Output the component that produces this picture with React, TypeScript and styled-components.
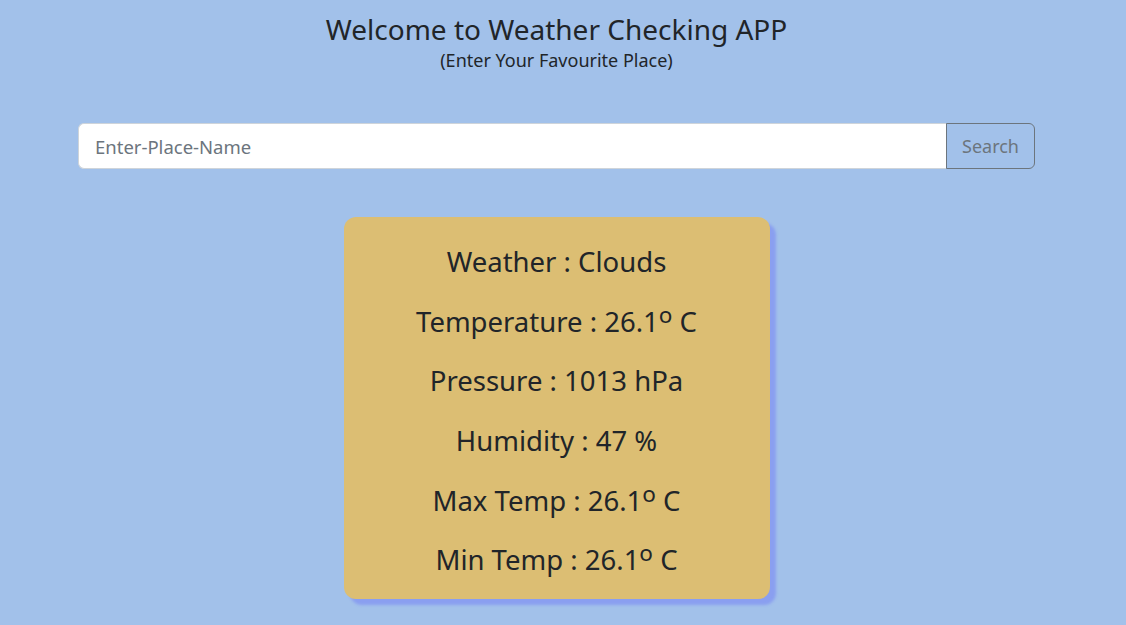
import React, { useState } from "react";
import styled, { createGlobalStyle } from "styled-components";

const GlobalStyle = createGlobalStyle`
  html, body {
    margin: 0;
    padding: 0;
    background: #a2c1ea;
  }
  body {
    font-family: "Noto Sans", "Open Sans", sans-serif;
    color: #212529;
  }
  * {
    box-sizing: border-box;
  }
`;

// Styled Components(Layout)
const Page = styled.div`
  width: 1113px;
  min-height: 625px;
  display: flex;
  flex-direction: column;
  align-items: center;
`;

const Header = styled.header`
  display: flex;
  flex-direction: column;
  align-items: center;
  padding-top: 13px;
`;

const Title = styled.h1`
  font-size: 28px;
  font-weight: 400;
  line-height: 1.2;
  margin: 0;
`;

const Subtitle = styled.p`
  font-size: 18px;
  line-height: 1.2;
  margin: 3px 0 0;
`;

const SearchGroup = styled.form`
  display: flex;
  width: 957px;
  height: 46px;
  margin-top: 52px;
`;

const SearchInput = styled.input`
  flex: 1;
  height: 100%;
  padding: 0 16px;
  font-family: inherit;
  font-size: 18.5px;
  color: #212529;
  background: #fff;
  border: 1px solid #ced4da;
  border-right: none;
  border-radius: 6px 0 0 6px;
  outline: none;

  &::placeholder {
    color: #6c757d;
  }
`;

const SearchButton = styled.button`
  width: 89px;
  height: 100%;
  font-family: inherit;
  font-size: 18px;
  color: #6c757d;
  background: transparent;
  border: 1px solid #6c757d;
  border-radius: 0 6px 6px 0;
  cursor: pointer;
`;

const WeatherCard = styled.div`
  width: 426px;
  margin-top: 48px;
  padding: 28px 0 23px;
  background: #dcbe73;
  border-radius: 12px;
  box-shadow: 6px 6px 3px #8a9ff0;
  display: flex;
  flex-direction: column;
  align-items: center;
  gap: 26.6px;
`;

const WeatherRow = styled.p`
  font-size: 27.5px;
  line-height: 1.2;
  margin: 0;
`;

const Deg = styled.span`
  font-size: 0.82em;
  position: relative;
  top: -0.4em;
`;

const rows: { label: string; value: string; unit?: string }[] = [
  { label: "Weather", value: "Clouds" },
  { label: "Temperature", value: "26.1", unit: "C" },
  { label: "Pressure", value: "1013 hPa" },
  { label: "Humidity", value: "47 %" },
  { label: "Max Temp", value: "26.1", unit: "C" },
  { label: "Min Temp", value: "26.1", unit: "C" },
];

const App: React.FC = () => {
  const [place, setPlace] = useState("");

  return (
    <>
      <GlobalStyle />
      <Page>
        <Header>
          <Title>Welcome to Weather Checking APP</Title>
          <Subtitle>(Enter Your Favourite Place)</Subtitle>
        </Header>

        <SearchGroup onSubmit={(e) => e.preventDefault()}>
          <SearchInput
            placeholder="Enter-Place-Name"
            value={place}
            onChange={(e) => setPlace(e.target.value)}
          />
          <SearchButton type="submit">Search</SearchButton>
        </SearchGroup>

        <WeatherCard>
          {rows.map((row) => (
            <WeatherRow key={row.label}>
              {row.label} : {row.value}
              {row.unit && (
                <>
                  <Deg>o</Deg> {row.unit}
                </>
              )}
            </WeatherRow>
          ))}
        </WeatherCard>
      </Page>
    </>
  );
};

export default App;
